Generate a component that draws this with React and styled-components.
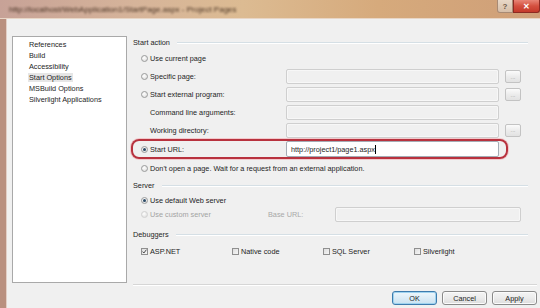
import React from 'react';
import styled, { createGlobalStyle } from 'styled-components';

const GlobalStyle = createGlobalStyle`
  html, body {
    margin: 0;
    padding: 0;
  }
  body {
    width: 540px;
    height: 308px;
    overflow: hidden;
    font-family: "Liberation Sans", Arial, sans-serif;
    font-size: 7.3px;
    color: #1e1e1e;
  }
`;

const Window = styled.div`
  width: 540px;
  height: 308px;
  display: flex;
  flex-direction: column;
  background: #f0f0f0;
  overflow: hidden;
`;

const TitleBar = styled.div`
  height: 19px;
  flex: none;
  display: flex;
  align-items: flex-start;
  background: linear-gradient(90deg, #c7a297 0%, #d6b49a 25%, #dcbb92 45%, #d6aa7c 70%, #cf9f78 100%);
  box-shadow: inset 0 -1px 0 #e8d6c6;
`;

const TitleText = styled.div`
  margin: 5px 0 0 9px;
  font-size: 8px;
  color: #3a2618;
  filter: blur(1px);
  opacity: 0.9;
  white-space: nowrap;
`;

const CaptionButton = styled.div`
  width: ${(p) => p.$w}px;
  height: 13px;
  display: flex;
  align-items: center;
  justify-content: center;
  font-size: 8px;
  font-weight: bold;
  border: 1px solid ${(p) => (p.$close ? '#8c2a22' : '#a88a74')};
  border-top: none;
  box-sizing: border-box;
  color: ${(p) => (p.$close ? '#ffffff' : '#6c5646')};
  background: ${(p) =>
    p.$close
      ? 'linear-gradient(180deg, #e88576 0%, #d4503f 50%, #c4392a 100%)'
      : 'linear-gradient(180deg, #e8d8c8 0%, #d6bea8 100%)'};
  border-radius: ${(p) => (p.$first ? '0 0 0 3px' : p.$close ? '0 0 3px 0' : '0')};
  margin-left: ${(p) => (p.$first ? 'auto' : '0')};
`;

const Body = styled.div`
  flex: 1;
  display: flex;
  align-items: flex-start;
  border-left: 6px solid #b9907f;
  box-shadow: inset 1px 0 0 #e2cfc6;
  padding: 17px 0 0 6px;
`;

const NavList = styled.ul`
  list-style: none;
  margin: 0;
  padding: 2px 0 0 0;
  width: 115px;
  height: 247px;
  box-sizing: border-box;
  border: 1px solid #a9a9a9;
  background: #ffffff;
  flex: none;
`;

const NavItem = styled.li`
  height: 11px;
  line-height: 11px;
  padding-left: 15px;
  white-space: nowrap;
  span {
    padding: 0 1px;
    background: ${(p) => (p.$active ? '#e6e6e6' : 'transparent')};
  }
`;

const Column = styled.div`
  width: 406px;
  margin-left: 4px;
  display: flex;
  flex-direction: column;
`;

const GroupHeader = styled.div`
  height: ${(p) => p.$h}px;
  margin-top: ${(p) => p.$mt || 0}px;
  margin-right: 9px;
  padding-left: 2px;
  display: flex;
  align-items: center;
  gap: 7px;
  white-space: nowrap;
  &::after {
    content: '';
    flex: 1;
    height: 1px;
    background: #d5dfe5;
    box-shadow: 0 1px 0 #ffffff;
  }
`;

const Row = styled.div`
  height: ${(p) => p.$h}px;
  display: flex;
  align-items: center;
  padding-left: 10px;
  white-space: nowrap;
`;

const HighlightRow = styled(Row)`
  width: 377px;
  box-sizing: border-box;
  border-radius: 8px;
  box-shadow: inset 0 0 0 2px #b8323e, 0 0 0 1px #f2c8cc;
`;

const LabelCell = styled.div`
  width: ${(p) => p.$w || 145}px;
  display: flex;
  align-items: center;
  flex: none;
  color: ${(p) => (p.$disabled ? '#a3a3a3' : '#1e1e1e')};
  padding-left: ${(p) => (p.$indent ? 9 : 0)}px;
  box-sizing: border-box;
`;

const Radio = styled.span`
  width: 7px;
  height: 7px;
  margin-right: 2px;
  box-sizing: border-box;
  border-radius: 50%;
  border: 1px solid ${(p) => (p.$disabled ? '#d2d2d2' : '#9a9b9b')};
  background: radial-gradient(circle at 40% 35%, #ffffff 0%, #e4e4e4 70%, #cfcfcf 100%);
  display: inline-flex;
  align-items: center;
  justify-content: center;
  flex: none;
  &::after {
    content: '';
    width: 3px;
    height: 3px;
    border-radius: 50%;
    background: ${(p) => (p.$checked ? '#2b4a66' : 'transparent')};
  }
`;

const TextBox = styled.div`
  width: ${(p) => p.$w || 213}px;
  height: ${(p) => p.$h || 15}px;
  box-sizing: border-box;
  border: 1px solid ${(p) => (p.$active ? '#a5acb5' : '#cfcfcf')};
  border-radius: 2px;
  background: ${(p) => (p.$active ? '#ffffff' : '#f0f0f0')};
  box-shadow: inset 0 0 0 1px ${(p) => (p.$active ? '#ffffff' : '#f7f7f7')};
  flex: none;
  display: flex;
  align-items: center;
  padding-left: 4px;
  font-size: 7.3px;
  color: #1e1e1e;
`;

const Caret = styled.span`
  width: 1px;
  height: 9px;
  background: #000000;
  margin-left: 0.5px;
`;

const Ellipsis = styled.div`
  width: 16px;
  height: 13px;
  margin-left: 6px;
  box-sizing: border-box;
  border: 1px solid #c3c3c3;
  border-radius: 2px;
  background: linear-gradient(180deg, #fbfbfb 0%, #ececec 50%, #e2e2e2 100%);
  color: #9a9a9a;
  font-size: 6px;
  display: flex;
  align-items: center;
  justify-content: center;
  line-height: 1;
  flex: none;
`;

const DisabledText = styled.span`
  color: #a8a8a8;
  width: 67px;
  flex: none;
`;

const CheckItem = styled.div`
  width: 91px;
  display: flex;
  align-items: center;
  flex: none;
`;

const CheckBox = styled.span`
  width: 7px;
  height: 7px;
  margin-right: 2px;
  box-sizing: border-box;
  border: 1px solid #8f8f8f;
  background: linear-gradient(135deg, #dedede 0%, #f6f6f6 100%);
  display: inline-flex;
  align-items: center;
  justify-content: center;
  flex: none;
  svg {
    display: block;
  }
`;

const Separator = styled.div`
  margin: 26px 0 0 2px;
  height: 1px;
  background: #d6d6d6;
  box-shadow: 0 1px 0 #ffffff;
`;

const ButtonBar = styled.div`
  margin-top: 6px;
  display: flex;
  justify-content: flex-end;
  gap: 5px;
`;

const Button = styled.div`
  width: 45px;
  height: 14px;
  box-sizing: border-box;
  border: 1px solid ${(p) => (p.$default ? '#3d7bad' : '#8a8a8a')};
  border-radius: 3px;
  background: ${(p) =>
    p.$default
      ? 'linear-gradient(180deg, #eef7fc 0%, #dcecf6 50%, #c9e2f1 100%)'
      : 'linear-gradient(180deg, #f4f4f4 0%, #ebebeb 50%, #dddddd 100%)'};
  box-shadow: inset 0 0 0 1px ${(p) => (p.$default ? '#9fd3ef' : '#fbfbfb')};
  display: flex;
  align-items: center;
  justify-content: center;
  font-size: 7.3px;
  color: #1e1e1e;
`;

const Check = () => (
  <svg width="5" height="5" viewBox="0 0 5 5">
    <path d="M0.6 2.6 L1.9 4 L4.4 0.7" fill="none" stroke="#3a3a3a" strokeWidth="0.9" />
  </svg>
);

const navItems = [
  'References',
  'Build',
  'Accessibility',
  'Start Options',
  'MSBuild Options',
  'Silverlight Applications',
];

const debuggers = [
  { label: 'ASP.NET', checked: true },
  { label: 'Native code' },
  { label: 'SQL Server' },
  { label: 'Silverlight' },
];

const App = () => (
  <>
    <GlobalStyle />
    <Window>
      <TitleBar>
        <TitleText>http://localhost/WebApplication1/StartPage.aspx - Project Pages</TitleText>
        <CaptionButton $w={16} $first>?</CaptionButton>
        <CaptionButton $w={27} $close>✕</CaptionButton>
      </TitleBar>
      <Body>
        <NavList>
          {navItems.map((item) => (
            <NavItem key={item} $active={item === 'Start Options'}>
              <span>{item}</span>
            </NavItem>
          ))}
        </NavList>
        <Column>
          <GroupHeader $h={13}>Start action</GroupHeader>
          <Row $h={19}>
            <LabelCell>
              <Radio />
              Use current page
            </LabelCell>
          </Row>
          <Row $h={17}>
            <LabelCell>
              <Radio />
              Specific page:
            </LabelCell>
            <TextBox />
            <Ellipsis>...</Ellipsis>
          </Row>
          <Row $h={19}>
            <LabelCell>
              <Radio />
              Start external program:
            </LabelCell>
            <TextBox />
            <Ellipsis>...</Ellipsis>
          </Row>
          <Row $h={17}>
            <LabelCell $indent>Command line arguments:</LabelCell>
            <TextBox />
          </Row>
          <Row $h={18}>
            <LabelCell $indent>Working directory:</LabelCell>
            <TextBox />
            <Ellipsis>...</Ellipsis>
          </Row>
          <HighlightRow $h={20}>
            <LabelCell>
              <Radio $checked />
              Start URL:
            </LabelCell>
            <TextBox $active $h={16}>
              http://project1/page1.aspx
              <Caret />
            </TextBox>
          </HighlightRow>
          <Row $h={18}>
            <Radio />
            Don't open a page. Wait for a request from an external application.
          </Row>

          <GroupHeader $h={16}>Server</GroupHeader>
          <Row $h={14}>
            <Radio $checked />
            Use default Web server
          </Row>
          <Row $h={14}>
            <LabelCell $disabled $w={127}>
              <Radio $disabled />
              Use custom server
            </LabelCell>
            <DisabledText>Base URL:</DisabledText>
            <TextBox $w={186} $h={15} />
          </Row>

          <GroupHeader $h={20} $mt={3}>Debuggers</GroupHeader>
          <Row $h={14}>
            {debuggers.map((d) => (
              <CheckItem key={d.label}>
                <CheckBox>{d.checked && <Check />}</CheckBox>
                {d.label}
              </CheckItem>
            ))}
          </Row>

          <Separator />
          <ButtonBar>
            <Button $default>OK</Button>
            <Button>Cancel</Button>
            <Button>Apply</Button>
          </ButtonBar>
        </Column>
      </Body>
    </Window>
  </>
);

export default App;
